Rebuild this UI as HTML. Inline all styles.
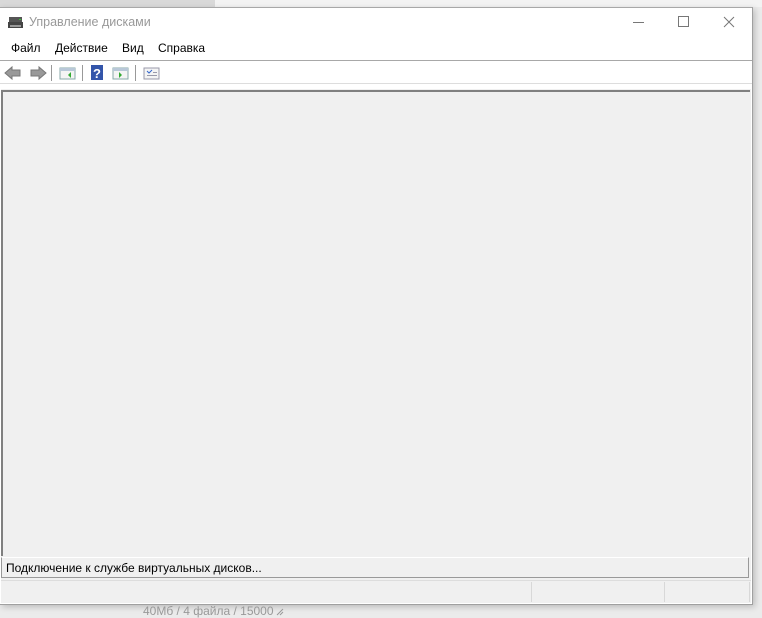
<!DOCTYPE html><html><head><style>
body{margin:0;width:762px;height:617px;background:#ebebeb;position:relative;overflow:hidden;font-family:"Liberation Sans",sans-serif;font-size:12px}
.a{position:absolute}
</style></head><body>
<div class="a" style="left:0;top:0;width:215px;height:7px;background:#d9d9d9"></div>
<div class="a" style="left:215px;top:0;width:547px;height:7px;background:#f3f3f3"></div>
<div class="a" style="left:0;top:7px;width:752px;height:596px;background:#fff;border-right:1px solid #a0a0a0;border-top:1px solid #a8a8a8;border-bottom:1px solid #a0a0a0;box-shadow:2px 2px 6px rgba(0,0,0,.2)"></div>
<svg class="a" style="left:8px;top:16px" width="16" height="14"><rect x="1" y="1" width="13" height="5" fill="#555"/><rect x="0" y="6" width="15" height="6" fill="#444"/><rect x="11" y="3" width="2" height="1" fill="#3c3"/><rect x="2" y="9" width="11" height="2" fill="#999"/></svg>
<div class="a" style="left:29px;top:15px;color:#999;font-size:12.5px">Управление дисками</div>
<div class="a" style="left:633px;top:22px;width:11px;height:1px;background:#777"></div>
<div class="a" style="left:678px;top:16px;width:9px;height:9px;border:1px solid #777"></div>
<svg class="a" style="left:723px;top:16px" width="12" height="12"><path d="M1 1L11 11M11 1L1 11" stroke="#777" stroke-width="1"/></svg>
<div class="a" style="left:11px;top:41px;color:#000">Файл</div>
<div class="a" style="left:55px;top:41px">Действие</div>
<div class="a" style="left:122px;top:41px">Вид</div>
<div class="a" style="left:158px;top:41px">Справка</div>
<div class="a" style="left:0;top:60px;width:752px;height:1px;background:#a8a8a8"></div>
<svg class="a" style="left:4px;top:65px" width="160" height="16">
<path d="M1 8L8 2V5H16V11H8V14Z" fill="#999" stroke="#777"/>
<path d="M42 8L35 2V5H27V11H35V14Z" fill="#999" stroke="#777"/>
<rect x="47" y="0" width="1" height="16" fill="#999"/>
<rect x="56" y="3" width="15" height="11" fill="#f4f4f4" stroke="#8aa"/><rect x="56" y="3" width="15" height="3" fill="#b8c8d8"/><path d="M67 7L64 10L67 13Z" fill="#3a3"/>
<rect x="78" y="0" width="1" height="16" fill="#999"/>
<rect x="87" y="0" width="12" height="15" fill="#3355aa"/><text x="89" y="13" fill="#fff" font-size="13" font-weight="bold" font-family="Liberation Sans">?</text>
<rect x="109" y="3" width="15" height="11" fill="#f4f4f4" stroke="#8aa"/><rect x="109" y="3" width="15" height="3" fill="#b8c8d8"/><path d="M115 7L118 10L115 13Z" fill="#3a3"/>
<rect x="131" y="0" width="1" height="16" fill="#999"/>
<rect x="140" y="3" width="15" height="11" fill="#f4f4f4" stroke="#99a"/><path d="M143 6L145 8L148 5" stroke="#36c" fill="none"/><rect x="149" y="7" width="4" height="1" fill="#99a"/><rect x="143" y="10" width="10" height="1" fill="#99a"/>
</svg>
<div class="a" style="left:0;top:83px;width:752px;height:1px;background:#ddd"></div>
<div class="a" style="left:1px;top:89px;width:750px;height:514px;background:#f0f0f0"></div>
<div class="a" style="left:1px;top:90px;width:749px;height:2px;background:#808080"></div>
<div class="a" style="left:1px;top:90px;width:2px;height:466px;background:#808080"></div>
<div class="a" style="left:1px;top:557px;width:746px;height:19px;background:#f0f0f0;border-top:1px solid #fff;border-right:1px solid #999;border-bottom:1px solid #999;border-left:1px solid #999"></div>
<div class="a" style="left:6px;top:561px;color:#000">Подключение к службе виртуальных дисков...</div>
<div class="a" style="left:1px;top:580px;width:750px;height:1px;background:#ddd"></div>
<div class="a" style="left:531px;top:582px;width:1px;height:20px;background:#d8d8d8"></div>
<div class="a" style="left:664px;top:582px;width:1px;height:20px;background:#d8d8d8"></div>
<div class="a" style="left:749px;top:582px;width:1px;height:20px;background:#d8d8d8"></div>
<div class="a" style="left:143px;top:604px;color:#999">40Мб / 4 файла / 15000</div>
<svg class="a" style="left:276px;top:608px" width="8" height="8"><path d="M1 7L7 1M4 7L7 4" stroke="#999"/></svg>
</body></html>
